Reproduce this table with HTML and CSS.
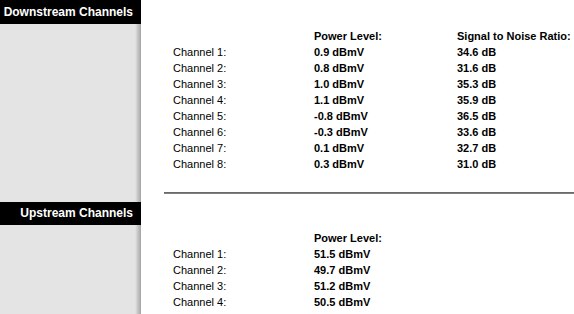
FILE: index.html
```html
<!DOCTYPE html>
<html>
<head>
<meta charset="utf-8">
<link rel="stylesheet" href="styles.css">
</head>
<body>
<div class="page">
  <section class="block downstream">
    <div class="side"><h2 class="bar">Downstream Channels</h2></div>
    <div class="main">
      <table class="chan">
        <tr><td></td><th>Power Level:</th><th>Signal to Noise Ratio:</th></tr>
        <tr><td>Channel 1:</td><th>0.9 dBmV</th><th>34.6 dB</th></tr>
        <tr><td>Channel 2:</td><th>0.8 dBmV</th><th>31.6 dB</th></tr>
        <tr><td>Channel 3:</td><th>1.0 dBmV</th><th>35.3 dB</th></tr>
        <tr><td>Channel 4:</td><th>1.1 dBmV</th><th>35.9 dB</th></tr>
        <tr><td>Channel 5:</td><th>-0.8 dBmV</th><th>36.5 dB</th></tr>
        <tr><td>Channel 6:</td><th>-0.3 dBmV</th><th>33.6 dB</th></tr>
        <tr><td>Channel 7:</td><th>0.1 dBmV</th><th>32.7 dB</th></tr>
        <tr><td>Channel 8:</td><th>0.3 dBmV</th><th>31.0 dB</th></tr>
      </table>
      <hr class="rule">
    </div>
  </section>
  <section class="block upstream">
    <div class="side"><h2 class="bar">Upstream Channels</h2></div>
    <div class="main">
      <table class="chan">
        <tr><td></td><th>Power Level:</th><th></th></tr>
        <tr><td>Channel 1:</td><th>51.5 dBmV</th><th></th></tr>
        <tr><td>Channel 2:</td><th>49.7 dBmV</th><th></th></tr>
        <tr><td>Channel 3:</td><th>51.2 dBmV</th><th></th></tr>
        <tr><td>Channel 4:</td><th>50.5 dBmV</th><th></th></tr>
      </table>
    </div>
  </section>
</div>
</body>
</html>
```
FILE: styles.css
```css
html, body {
  margin: 0;
  padding: 0;
  background: #fff;
}
body {
  font-family: "Liberation Sans", Arial, sans-serif;
  color: #000;
}
.page {
  width: 574px;
  height: 314px;
  overflow: hidden;
  background: linear-gradient(to right, #e4e4e4 0, #e4e4e4 135px, #c4c4c4 138px, #a4a4a4 141px, #fff 141px);
}
.block {
  display: grid;
  grid-template-columns: 141px 1fr;
}
.side {
  min-width: 0;
}
.bar {
  margin: 0;
  height: 24px;
  line-height: 24px;
  background: #000;
  color: #fff;
  font-size: 12px;
  font-weight: bold;
  text-align: right;
  padding-right: 8px;
  white-space: nowrap;
}
.upstream .bar {
  height: 23px;
  line-height: 23px;
}
.main {
  padding-top: 28px;
}
.chan {
  border-collapse: collapse;
  margin-left: 32px;
  font-size: 11px;
}
.chan td, .chan th {
  padding: 0;
  height: 16px;
  line-height: 16px;
  text-align: left;
  white-space: nowrap;
}
.chan td {
  width: 141px;
  font-weight: normal;
}
.chan th {
  font-weight: bold;
}
.chan tr > :nth-child(2) {
  width: 143px;
}
.rule {
  margin: 20px 0 8px 23px;
  border: 0;
  height: 1px;
  background: #808080;
  border-top: 1px solid #6a6a6a;
}
```
